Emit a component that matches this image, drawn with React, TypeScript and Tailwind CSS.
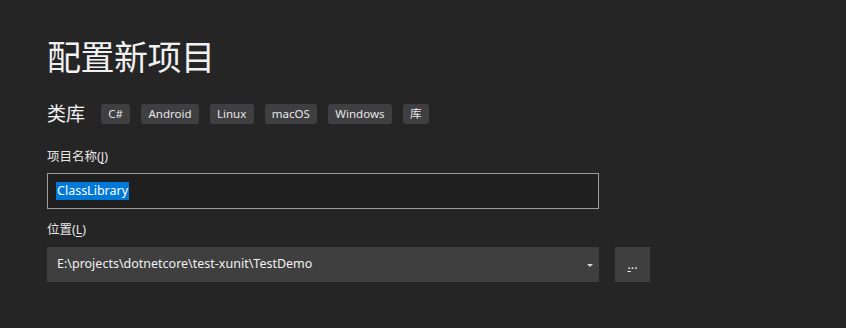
import React from 'react';

const tags = ['C#', 'Android', 'Linux', 'macOS', 'Windows', '库'];

const font = { fontFamily: '"Segoe UI", "Noto Sans", "Noto Sans CJK SC", sans-serif' };

const App: React.FC = () => {
  return (
    <div
      className="w-[846px] h-[328px] bg-[#252526] text-[#f1f1f1] pl-[47px] pt-[34px] overflow-hidden"
      style={font}
    >
      <h1 className="text-[34px] leading-[46px] font-normal tracking-[-0.5px]">配置新项目</h1>

      <div className="flex items-center mt-[23px] h-[22px]">
        <span className="text-[19px] leading-[22px] mr-[16px]">类库</span>
        <div className="flex gap-[11px]">
          {tags.map(tag => (
            <span
              key={tag}
              className="h-[20px] px-[7.25px] flex items-center rounded-[3px] bg-[#3f3f41] text-[11.5px] text-[#e6e6e6]"
            >
              {tag}
            </span>
          ))}
        </div>
      </div>

      <div className="mt-[23px] text-[12.5px] leading-[18px] text-[#e6e6e6]">
        项目名称(<span className="underline underline-offset-2">J</span>)
      </div>
      <div className="mt-[7px] w-[552px] h-[36px] border border-[#9d9d9d] bg-[#1f1f1f] flex items-center pl-[8px]">
        <span className="bg-[#0078d7] text-white text-[12.5px] leading-[18px] px-[1px]">ClassLibrary</span>
      </div>

      <div className="mt-[12px] text-[12.5px] leading-[18px] text-[#e6e6e6]">
        位置(<span className="underline underline-offset-2">L</span>)
      </div>
      <div className="mt-[8px] flex gap-[16px]">
        <div className="w-[552px] h-[35px] bg-[#3f3f3f] flex items-center pl-[10px] pr-[6px]">
          <span className="flex-1 text-[12.5px] text-[#f1f1f1]">E:\projects\dotnetcore\test-xunit\TestDemo</span>
          <svg width="6" height="4" viewBox="0 0 6 4" className="mt-[2px]">
            <path d="M0 0 H6 L3 3 Z" fill="#d8d8d8" />
          </svg>
        </div>
        <div className="w-[35px] h-[35px] bg-[#3f3f3f] flex items-end justify-center pb-[11px]">
          <span className="text-[12.5px] leading-[12px] text-[#f1f1f1]">
            <span className="underline underline-offset-2">.</span>..
          </span>
        </div>
      </div>
    </div>
  );
};

export default App;
